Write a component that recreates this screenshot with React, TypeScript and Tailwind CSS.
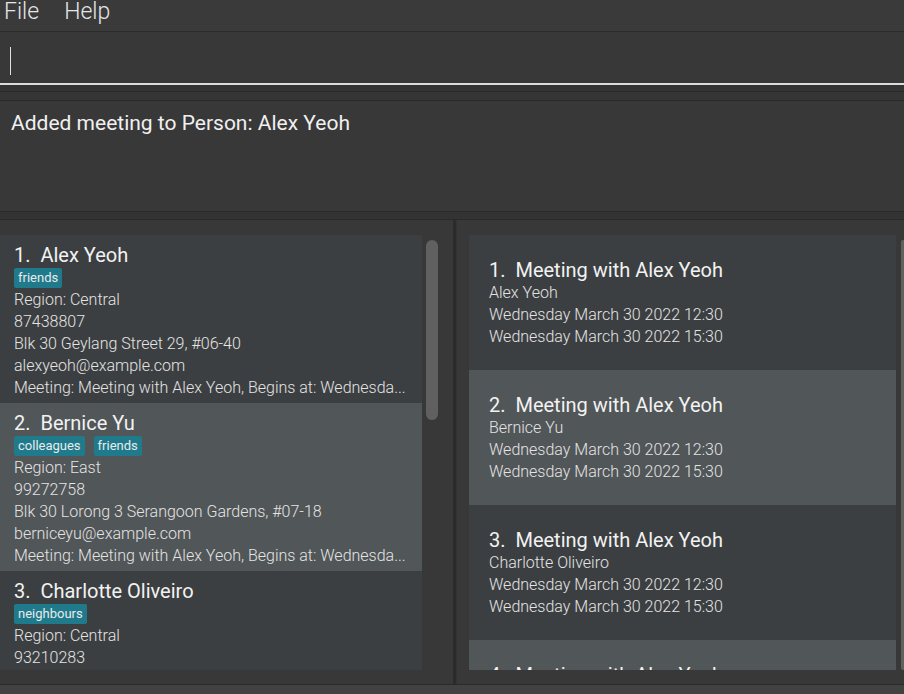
import React from "react";

const persons = [
  {
    n: 1,
    name: "Alex Yeoh",
    tags: ["friends"],
    lines: [
      "Region: Central",
      "87438807",
      "Blk 30 Geylang Street 29, #06-40",
      "alexyeoh@example.com",
      "Meeting: Meeting with Alex Yeoh, Begins at: Wednesda...",
    ],
  },
  {
    n: 2,
    name: "Bernice Yu",
    tags: ["colleagues", "friends"],
    lines: [
      "Region: East",
      "99272758",
      "Blk 30 Lorong 3 Serangoon Gardens, #07-18",
      "berniceyu@example.com",
      "Meeting: Meeting with Alex Yeoh, Begins at: Wednesda...",
    ],
  },
  {
    n: 3,
    name: "Charlotte Oliveiro",
    tags: ["neighbours"],
    lines: ["Region: Central", "93210283"],
  },
];

const meetings = ["Alex Yeoh", "Bernice Yu", "Charlotte Oliveiro"];

export default function App() {
  return (
    <div
      className="w-[904px] h-[694px] bg-[#383838] flex flex-col overflow-hidden text-[#e8e8e8]"
      style={{ fontFamily: "Roboto, 'Noto Sans', sans-serif" }}
    >
      {/* menu */}
      <div className="h-[32px] shrink-0 bg-[#3a3a3a] border-b border-[#2b2b2b] flex items-start text-[23px] leading-[23px] text-[#e6e6e6] font-light">
        <span className="pl-[4px]">File</span>
        <span className="pl-[25px]">Help</span>
      </div>
      {/* command box */}
      <div className="h-[51px] shrink-0 bg-[#383838] flex items-center pl-[10px]">
        <div className="w-[1px] h-[28px] mt-[6px] bg-[#e0e0e0]" />
      </div>
      <div className="h-[2px] shrink-0 bg-[#dcdcdc]" />
      <div className="h-[6px] shrink-0 bg-[#333333]" />
      <div className="h-[1px] shrink-0 bg-[#2a2a2a]" />
      <div className="h-[8px] shrink-0 bg-[#353535]" />
      <div className="h-[1px] shrink-0 bg-[#2a2a2a]" />
      {/* result */}
      <div className="h-[110px] shrink-0 bg-[#383838] pl-[11px] pt-[9px] text-[21px] leading-[26px] text-[#f0f0f0]">
        Added meeting to Person: Alex Yeoh
      </div>
      <div className="h-[1px] shrink-0 bg-[#2a2a2a]" />
      <div className="h-[7px] shrink-0 bg-[#333333]" />
      <div className="h-[1px] shrink-0 bg-[#2a2a2a]" />
      {/* main */}
      <div className="h-[464px] shrink-0 flex">
        {/* left */}
        <div className="w-[453px] flex pt-[15px]">
          <div className="w-[422px] h-[435px] overflow-hidden flex flex-col">
            {persons.map((p, i) => (
              <div
                key={p.n}
                className={`h-[168px] shrink-0 pl-[14px] pt-[8px] ${i % 2 === 1 ? "bg-[#515658]" : "bg-[#3c3f41]"}`}
              >
                <div className="text-[20px] leading-[24px] text-[#f2f2f2] whitespace-pre">
                  {p.n}.  {p.name}
                </div>
                <div className="flex gap-[9px] mt-[1px] mb-[1px]">
                  {p.tags.map((t) => (
                    <span
                      key={t}
                      className="bg-[#1f7a8c] text-[#eaeaea] text-[13px] leading-[20px] px-[4px] rounded-[2px]"
                    >
                      {t}
                    </span>
                  ))}
                </div>
                <div className="text-[16px] leading-[22px] text-[#e4e4e4] font-light">
                  {p.lines.map((l) => (
                    <div key={l} className="whitespace-nowrap">
                      {l}
                    </div>
                  ))}
                </div>
              </div>
            ))}
          </div>
          <div className="flex-1 pl-[4px] pt-[5px]">
            <div className="w-[12px] h-[180px] rounded-full bg-[#606060]" />
          </div>
        </div>
        <div className="w-[4px] bg-[#2b2b2b] border-r border-[#333333]" />
        {/* right */}
        <div className="flex-1 flex pl-[12px] pt-[15px]">
          <div className="w-[427px] h-[435px] overflow-hidden flex flex-col">
            {meetings.map((m, i) => (
              <div
                key={m}
                className={`h-[135px] shrink-0 pl-[20px] pt-[23px] ${i % 2 === 1 ? "bg-[#515658]" : "bg-[#3c3f41]"}`}
              >
                <div className="text-[20px] leading-[24px] text-[#f2f2f2] whitespace-pre">
                  {i + 1}.  Meeting with Alex Yeoh
                </div>
                <div className="text-[16px] leading-[22px] text-[#e4e4e4] font-light">
                  <div>{m}</div>
                  <div>Wednesday March 30 2022 12:30</div>
                  <div>Wednesday March 30 2022 15:30</div>
                </div>
              </div>
            ))}
            <div className="flex-1 bg-[#515658] pl-[20px] pt-[23px] overflow-hidden">
              <div className="text-[20px] leading-[24px] text-[#f2f2f2] whitespace-pre">
                4.  Meeting with Alex Yeoh
              </div>
            </div>
          </div>
          <div className="flex-1 flex justify-end pt-[5px]">
            <div className="w-[3px] h-[430px] bg-[#606060] rounded-l-[2px]" />
          </div>
        </div>
      </div>
      <div className="h-[1px] shrink-0 bg-[#2a2a2a]" />
      <div className="flex-1 bg-[#424242]" />
    </div>
  );
}
